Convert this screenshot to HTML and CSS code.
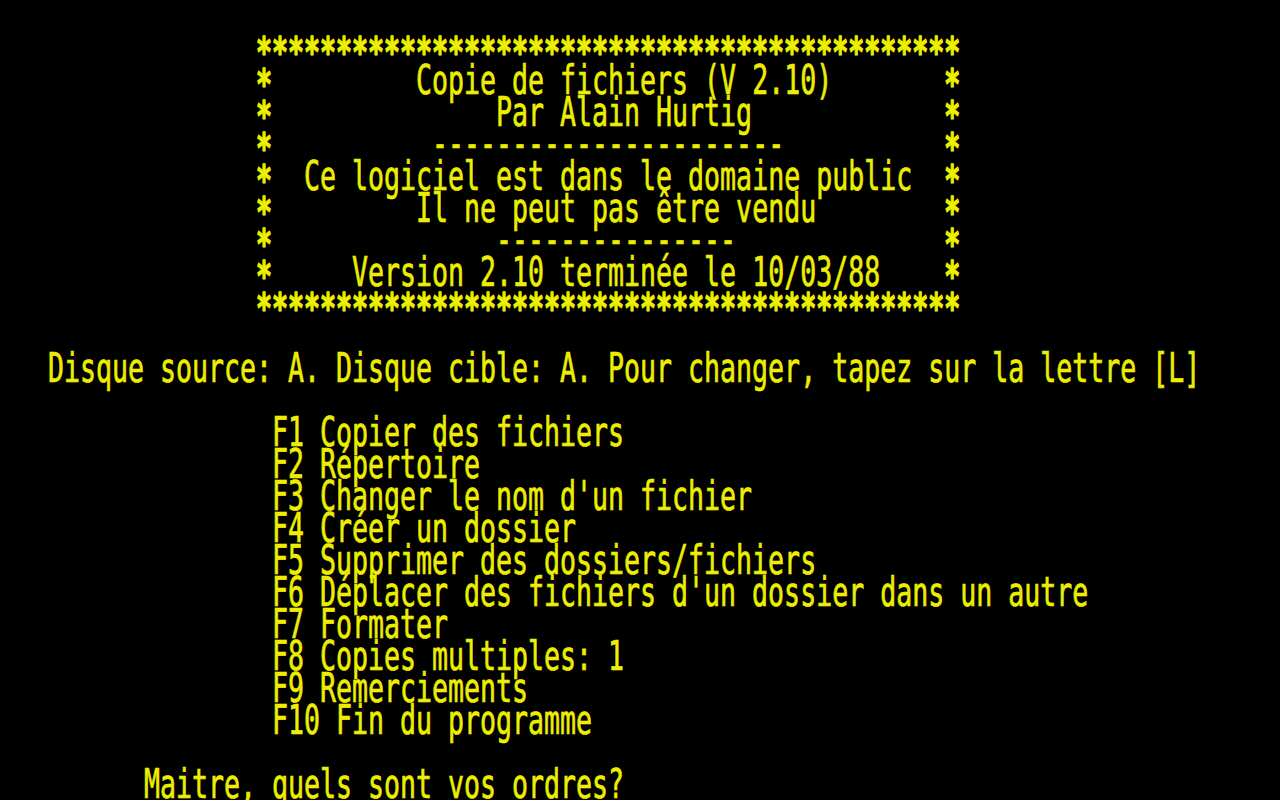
FILE: index.html
```html
<!DOCTYPE html>
<html lang="fr">
<head>
<meta charset="utf-8">
<title>Copie de fichiers</title>
<link rel="stylesheet" href="styles.css">
</head>
<body>
<div class="frame"><div class="screen"><pre class="text">

                <span class="star">********************************************</span>
                <span class="star">*</span>         Copie de fichiers (V 2.10)       <span class="star">*</span>
                <span class="star">*</span>              Par Alain Hurtig            <span class="star">*</span>
                <span class="star">*</span>          ----------------------          <span class="star">*</span>
                <span class="star">*</span>  Ce logiciel est dans le domaine public  <span class="star">*</span>
                <span class="star">*</span>         Il ne peut pas être vendu        <span class="star">*</span>
                <span class="star">*</span>              ---------------             <span class="star">*</span>
                <span class="star">*</span>     Version 2.10 terminée le 10/03/88    <span class="star">*</span>
                <span class="star">********************************************</span>

   Disque source: A. Disque cible: A. Pour changer, tapez sur la lettre [L]

                 F1 Copier des fichiers
                 F2 Répertoire
                 F3 Changer le nom d'un fichier
                 F4 Créer un dossier
                 F5 Supprimer des dossiers/fichiers
                 F6 Déplacer des fichiers d'un dossier dans un autre
                 F7 Formater
                 F8 Copies multiples: 1
                 F9 Remerciements
                 F10 Fin du programme

         Maitre, quels sont vos ordres?</pre></div></div>
</body>
</html>
```
FILE: styles.css
```css
html, body {
  margin: 0;
  padding: 0;
  background: #000;
  overflow: hidden;
}
.frame {
  width: 1280px;
  height: 800px;
  overflow: hidden;
  background: #000;
}
.screen {
  width: 1926px;
  height: 800px;
  transform-origin: 0 0;
  transform: scaleX(0.6645);
}
.text {
  margin: 0;
  font-family: "DejaVu Sans Mono", monospace;
  font-size: 40px;
  line-height: 32px;
  color: #eeee00;
  white-space: pre;
  -webkit-text-stroke: 0.7px #eeee00;
}
.star {
  display: inline-block;
  font-weight: bold;
  transform: translateY(4px);
  -webkit-text-stroke: 1.2px #eeee00;
}
```
